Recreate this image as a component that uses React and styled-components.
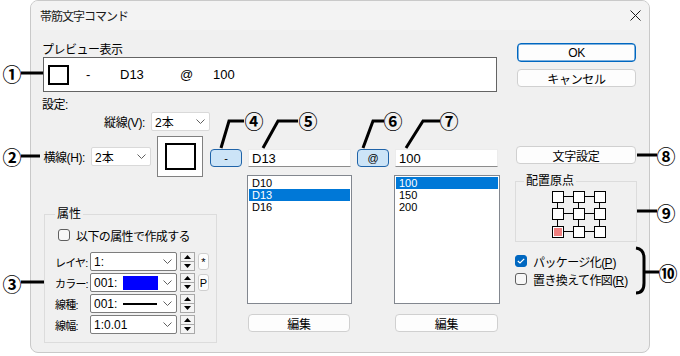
import React from "react";
import styled, { createGlobalStyle } from "styled-components";

const FONT = `"Liberation Sans", "Noto Sans CJK JP", sans-serif`;

const Global = createGlobalStyle`
  html, body { margin: 0; padding: 0; background: #fff; }
  body { font-family: ${FONT}; font-size: 12px; color: #000; }
  * { box-sizing: border-box; }
`;

const Page = styled.div`
  position: relative;
  width: 680px;
  height: 356px;
  overflow: hidden;
  background: #fff;
`;

const Dialog = styled.div`
  margin-left: 30px;
  width: 620px;
  height: 353px;
  border: 1px solid #c9c9c9;
  border-radius: 8px;
  background: #f0f0f0;
  overflow: hidden;
  display: flex;
  flex-direction: column;
`;

const TitleBar = styled.div`
  flex: none;
  height: 29px;
  background: #f3f3f3;
  display: flex;
  align-items: center;
  justify-content: space-between;
  padding: 0 8px 0 9px;
`;

const Title = styled.span`
  font-size: 12px;
  letter-spacing: -1px;
  color: #1a1a1a;
`;

const Body = styled.div`
  display: flex;
  padding: 13px 0 0 11px;
`;

const LeftCol = styled.div`
  width: 458px;
  flex: none;
  display: flex;
  flex-direction: column;
`;

const RightCol = styled.div`
  width: 122px;
  flex: none;
  margin-left: 15px;
  display: flex;
  flex-direction: column;
`;

const SectionLabel = styled.div`
  height: 14px;
  line-height: 14px;
  letter-spacing: -0.5px;
  margin-top: ${(p) => p.$mt || 0}px;
`;

const PreviewBox = styled.div`
  margin-left: 1px;
  width: 454px;
  height: 35px;
  border: 1px solid #646464;
  background: #fff;
  display: flex;
  align-items: center;
  padding-left: 4px;
`;

const PreviewSquare = styled.div`
  width: 21px;
  height: 20px;
  border: 2px solid #000;
  margin-right: 17px;
  flex: none;
`;

const PreviewCell = styled.span`
  width: ${(p) => p.$w}px;
  flex: none;
  font-size: 13px;
`;

const Row = styled.div`
  display: flex;
  align-items: center;
  height: ${(p) => p.$h}px;
  margin-top: ${(p) => p.$mt || 0}px;
`;

const RowLabel = styled.span`
  width: ${(p) => p.$w}px;
  flex: none;
  text-align: right;
  padding-right: 6px;
  white-space: nowrap;
  letter-spacing: -0.4px;
`;

const SelectBox = styled.div`
  width: ${(p) => p.$w}px;
  height: 19px;
  flex: none;
  background: #fff;
  border: 1px solid ${(p) => (p.$dark ? "#7d7d7d" : "#d9d9d9")};
  border-radius: 2px;
  display: flex;
  align-items: center;
  padding-left: 3px;
  padding-right: 4px;
  font-size: 12px;
`;

const SelectValue = styled.span`
  width: ${(p) => p.$w || 0}px;
  flex: none;
  white-space: nowrap;
`;

const Chevron = styled.svg`
  margin-left: auto;
  flex: none;
`;

const Swatch = styled.span`
  width: 35px;
  height: 14px;
  background: #0000ff;
  flex: none;
`;

const LineSample = styled.span`
  width: 34px;
  height: 2px;
  background: #000;
  flex: none;
`;

const SampleBox = styled.div`
  margin-left: 6px;
  width: 46px;
  height: 41px;
  flex: none;
  border: 1px solid #808080;
  background: #fff;
  display: flex;
  align-items: center;
  justify-content: center;
`;

const SampleInner = styled.div`
  width: 31px;
  height: 27px;
  border: 2px solid #000;
`;

const BlueButton = styled.div`
  margin-left: ${(p) => p.$ml}px;
  width: 32px;
  height: 18px;
  flex: none;
  margin-top: 3px;
  background: #cce4f7;
  border: 1px solid #1f63a8;
  border-radius: 4px;
  display: flex;
  align-items: center;
  justify-content: center;
  font-size: 11px;
`;

const TextInput = styled.div`
  margin-left: 6px;
  margin-top: 3px;
  width: 103px;
  height: 18px;
  flex: none;
  background: #fff;
  border: 1px solid #ececec;
  border-bottom-color: #8c8c8c;
  display: flex;
  align-items: center;
  padding-left: 3px;
  font-size: 13px;
`;

const Bottom = styled.div`
  display: flex;
  align-items: flex-start;
  margin-top: -2px;
`;

const Group = styled.fieldset`
  margin: ${(p) => p.$mt}px 0 0 ${(p) => p.$ml}px;
  width: ${(p) => p.$w}px;
  min-width: 0;
  border: 1px solid #dcdcdc;
  padding: ${(p) => p.$pad};
  flex: none;
`;

const Legend = styled.legend`
  padding: 0 2px;
  font-size: 12px;
  line-height: 14px;
  height: 14px;
`;

const CheckRow = styled.label`
  display: flex;
  align-items: center;
  gap: 6px;
  height: 14px;
  margin-left: ${(p) => p.$ml || 0}px;
  margin-top: ${(p) => p.$mt || 0}px;
  white-space: nowrap;
`;

const CheckText = styled.span`
  letter-spacing: -0.6px;
`;

const Mnemonic = styled.u`
  letter-spacing: 0;
  text-underline-offset: 1px;
`;

const CheckBox = styled.span`
  width: 12px;
  height: 12px;
  flex: none;
  border-radius: 3px;
  border: 1px solid ${(p) => (p.$on ? "#0067c0" : "#5f5f5f")};
  background: ${(p) => (p.$on ? "#0067c0" : "#f7f7f7")};
  display: flex;
  align-items: center;
  justify-content: center;
`;

const AttrRows = styled.div`
  margin-top: 10px;
  display: flex;
  flex-direction: column;
  gap: 2px;
`;

const AttrLabel = styled.span`
  width: 35px;
  flex: none;
  white-space: nowrap;
  font-size: 11px;
  letter-spacing: -0.8px;
`;

const Spinner = styled.div`
  margin-left: 3px;
  width: 15px;
  height: 19px;
  flex: none;
  border: 1px solid #a9a9a9;
  background: #f4f4f4;
  display: flex;
  flex-direction: column;
`;

const SpinHalf = styled.div`
  flex: 1;
  display: flex;
  align-items: center;
  justify-content: center;
  border-top: ${(p) => (p.$lower ? "1px solid #a9a9a9" : "none")};
`;

const MiniButton = styled.div`
  margin-left: 3px;
  width: 11px;
  height: 17px;
  flex: none;
  border: 1px solid #cfcfcf;
  border-radius: 3px;
  background: #fdfdfd;
  display: flex;
  align-items: center;
  justify-content: center;
  font-size: 11px;
`;

const ListCol = styled.div`
  margin-left: ${(p) => p.$ml}px;
  width: ${(p) => p.$w}px;
  flex: none;
  display: flex;
  flex-direction: column;
`;

const ListBox = styled.div`
  height: 129px;
  border: 1px solid #82878f;
  background: #fff;
  padding: 1px;
`;

const ListItem = styled.div`
  height: 12px;
  line-height: 12px;
  padding-left: 3px;
  font-size: 11px;
  overflow: hidden;
  background: ${(p) => (p.$sel ? "#0078d7" : "transparent")};
  color: ${(p) => (p.$sel ? "#fff" : "#000")};
`;

const Button = styled.div`
  margin-top: ${(p) => p.$mt || 0}px;
  margin-left: ${(p) => p.$ml || 0}px;
  width: ${(p) => p.$w}px;
  height: ${(p) => p.$h || 18}px;
  flex: none;
  background: #fdfdfd;
  border: 1px solid ${(p) => (p.$primary ? "#0067c0" : "#d0d0d0")};
  box-shadow: ${(p) => (p.$primary ? "inset 0 0 0 0.5px #0067c0" : "none")};
  border-radius: 4px;
  display: flex;
  align-items: center;
  justify-content: center;
  font-size: 12px;
  letter-spacing: -0.3px;
`;

const GridSvg = styled.svg`
  display: block;
  margin-left: 27px;
`;

const OptionRows = styled.div`
  margin-top: 12px;
  display: flex;
  flex-direction: column;
  gap: 4px;
`;

const Overlay = styled.div`
  position: absolute;
  inset: 0;
  pointer-events: none;
`;

const LeaderSvg = styled.svg`
  position: absolute;
  left: 0;
  top: 0;
`;

const Marker = styled.span`
  position: absolute;
  left: ${(p) => p.$x}px;
  top: ${(p) => p.$y}px;
  transform: translate(-50%, -50%);
  font-family: "Noto Sans CJK JP", "DejaVu Sans", sans-serif;
  font-weight: 700;
  font-size: 19px;
  line-height: 1;
  color: #000;
`;

const ChevronIcon = () => (
  <Chevron width="9" height="5" viewBox="0 0 9 5">
    <path d="M0.5 0.5 L4.5 4.5 L8.5 0.5" fill="none" stroke="#606060" strokeWidth="1" />
  </Chevron>
);

const Select = ({ w, dark, children }) => (
  <SelectBox $w={w} $dark={dark}>
    {children}
    <ChevronIcon />
  </SelectBox>
);

const SpinnerControl = () => (
  <Spinner>
    <SpinHalf>
      <svg width="7" height="4" viewBox="0 0 7 4"><polygon points="3.5,0 7,4 0,4" fill="#000" /></svg>
    </SpinHalf>
    <SpinHalf $lower>
      <svg width="7" height="4" viewBox="0 0 7 4"><polygon points="0,0 7,0 3.5,4" fill="#000" /></svg>
    </SpinHalf>
  </Spinner>
);

const Check = ({ on }) => (
  <CheckBox $on={on}>
    {on && (
      <svg width="8" height="6" viewBox="0 0 8 6">
        <path d="M0.8 3 L3 5 L7.2 0.8" fill="none" stroke="#fff" strokeWidth="1.2" />
      </svg>
    )}
  </CheckBox>
);

const GX = [1, 22, 43];
const GY = [1, 18, 36];

const PlacementGrid = () => (
  <GridSvg width="58" height="48" viewBox="0 0 58 48">
    {GY.map((y) => (
      <line key={"h" + y} x1={GX[0] + 11} y1={y + 5.5} x2={GX[2]} y2={y + 5.5} stroke="#000" strokeWidth="1" />
    ))}
    {GX.map((x) => (
      <line key={"v" + x} x1={x + 5.5} y1={GY[0] + 11} x2={x + 5.5} y2={GY[2]} stroke="#000" strokeWidth="1" />
    ))}
    {GY.map((y, r) =>
      GX.map((x, c) => (
        <g key={r + "-" + c}>
          <rect x={x + 0.5} y={y + 0.5} width="11" height="11" fill="#fff" stroke="#000" strokeWidth="1" />
          {r === 2 && c === 0 && <rect x={x + 2} y={y + 2} width="8" height="8" fill="#f07f7f" />}
        </g>
      ))
    )}
  </GridSvg>
);

const Annotations = () => (
  <Overlay>
    <LeaderSvg width="680" height="356" viewBox="0 0 680 356">
      <g fill="none" stroke="#000" strokeWidth="3">
        <path d="M21 73 H43" />
        <path d="M21 156 H40" />
        <path d="M21 282 H44" />
        <path d="M221 148 L229 121 H244" />
        <path d="M263 148 L278 121 H298" />
        <path d="M363 148 L373 121 H384" />
        <path d="M406 148 L423 121 H440" />
        <path d="M637 155 H657" />
        <path d="M637 211 H657" />
        <path d="M636 248 Q644 249 644 258 V283 Q644 293 636 293" />
        <path d="M644 272 H659" />
      </g>
    </LeaderSvg>
    <Marker $x={12} $y={73}>①</Marker>
    <Marker $x={12} $y={156}>②</Marker>
    <Marker $x={12} $y={283}>③</Marker>
    <Marker $x={254} $y={120}>④</Marker>
    <Marker $x={308} $y={120}>⑤</Marker>
    <Marker $x={393} $y={120}>⑥</Marker>
    <Marker $x={449} $y={120}>⑦</Marker>
    <Marker $x={666} $y={155}>⑧</Marker>
    <Marker $x={666} $y={212}>⑨</Marker>
    <Marker $x={668} $y={272}>⑩</Marker>
  </Overlay>
);

export default function App() {
  return (
    <Page>
      <Global />
      <Dialog>
        <TitleBar>
          <Title>帯筋文字コマンド</Title>
          <svg width="11" height="11" viewBox="0 0 11 11">
            <path d="M0.5 0.5 L10.5 10.5 M10.5 0.5 L0.5 10.5" stroke="#1a1a1a" strokeWidth="1" />
          </svg>
        </TitleBar>
        <Body>
          <LeftCol>
            <SectionLabel>プレビュー表示</SectionLabel>
            <PreviewBox>
              <PreviewSquare />
              <PreviewCell $w={34}>-</PreviewCell>
              <PreviewCell $w={60}>D13</PreviewCell>
              <PreviewCell $w={33}>@</PreviewCell>
              <PreviewCell $w={40}>100</PreviewCell>
            </PreviewBox>
            <SectionLabel $mt={6}>設定:</SectionLabel>
            <Row $h={19}>
              <RowLabel $w={109}>縦線(V):</RowLabel>
              <Select w={59}>
                <SelectValue>2本</SelectValue>
              </Select>
            </Row>
            <Row $h={41} $mt={5}>
              <RowLabel $w={49}>横線(H):</RowLabel>
              <Select w={60}>
                <SelectValue>2本</SelectValue>
              </Select>
              <SampleBox>
                <SampleInner />
              </SampleBox>
              <BlueButton $ml={7}>-</BlueButton>
              <TextInput>D13</TextInput>
              <BlueButton $ml={6}>@</BlueButton>
              <TextInput>100</TextInput>
            </Row>
            <Bottom>
              <Group $mt={32} $ml={2} $w={173} $pad="7px 0 8px 10px">
                <Legend>属性</Legend>
                <CheckRow $ml={3}>
                  <Check />
                  <CheckText>以下の属性で作成する</CheckText>
                </CheckRow>
                <AttrRows>
                  <Row $h={19}>
                    <AttrLabel>レイヤ:</AttrLabel>
                    <Select w={87} dark>
                      <SelectValue>1:</SelectValue>
                    </Select>
                    <SpinnerControl />
                    <MiniButton>*</MiniButton>
                  </Row>
                  <Row $h={19}>
                    <AttrLabel>カラー:</AttrLabel>
                    <Select w={87} dark>
                      <SelectValue $w={29}>001:</SelectValue>
                      <Swatch />
                    </Select>
                    <SpinnerControl />
                    <MiniButton>P</MiniButton>
                  </Row>
                  <Row $h={19}>
                    <AttrLabel>線種:</AttrLabel>
                    <Select w={87} dark>
                      <SelectValue $w={29}>001:</SelectValue>
                      <LineSample />
                    </Select>
                    <SpinnerControl />
                  </Row>
                  <Row $h={19}>
                    <AttrLabel>線幅:</AttrLabel>
                    <Select w={87} dark>
                      <SelectValue>1:0.01</SelectValue>
                    </Select>
                    <SpinnerControl />
                  </Row>
                </AttrRows>
              </Group>
              <ListCol $ml={30} $w={105}>
                <ListBox>
                  <ListItem>D10</ListItem>
                  <ListItem $sel>D13</ListItem>
                  <ListItem>D16</ListItem>
                </ListBox>
                <Button $mt={10} $ml={1} $w={102}>編集</Button>
              </ListCol>
              <ListCol $ml={42} $w={106}>
                <ListBox>
                  <ListItem $sel>100</ListItem>
                  <ListItem>150</ListItem>
                  <ListItem>200</ListItem>
                </ListBox>
                <Button $mt={10} $ml={1} $w={103}>編集</Button>
              </ListCol>
            </Bottom>
          </LeftCol>
          <RightCol>
            <Button $ml={2} $w={119} $h={19} $primary>OK</Button>
            <Button $mt={7} $ml={2} $w={119}>キャンセル</Button>
            <Button $mt={59} $ml={1} $w={120}>文字設定</Button>
            <Group $mt={10} $ml={0} $w={122} $pad="2px 0 3px 8px">
              <Legend>配置原点</Legend>
              <PlacementGrid />
            </Group>
            <OptionRows>
              <CheckRow>
                <Check on />
                <CheckText>
                  パッケージ化(<Mnemonic>P</Mnemonic>)
                </CheckText>
              </CheckRow>
              <CheckRow>
                <Check />
                <CheckText>
                  置き換えて作図(<Mnemonic>R</Mnemonic>)
                </CheckText>
              </CheckRow>
            </OptionRows>
          </RightCol>
        </Body>
      </Dialog>
      <Annotations />
    </Page>
  );
}
